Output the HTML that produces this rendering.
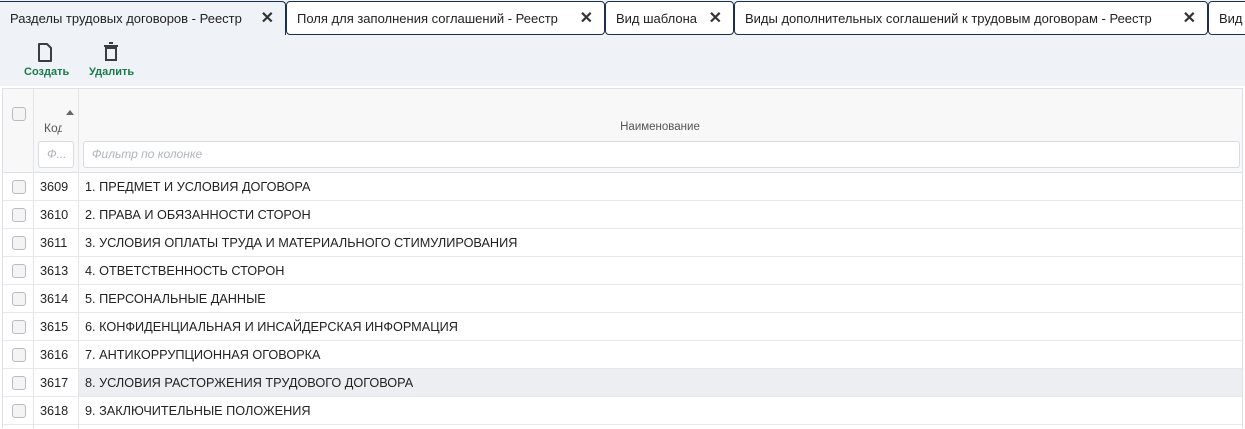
<!DOCTYPE html>
<html><head><meta charset="utf-8"><style>
*{box-sizing:border-box;margin:0;padding:0}
body{width:1245px;height:427px;overflow:hidden;background:#fff;font-family:"Liberation Sans",sans-serif;font-size:12.7px;color:#222;position:relative}
.top{position:absolute;left:0;top:0;width:1245px;height:86px;background:#eff2f7}
.tab{position:absolute;top:1px;height:34px;border:1.5px solid #1d2f4f;border-radius:4px;background:#fff;padding:0 0 0 10px;line-height:33px;font-size:13px;white-space:nowrap;overflow:hidden}
.tab .x{position:absolute;right:11px;top:0;font-size:16px;font-weight:bold;color:#333}
.tab.act{background:#eff2f7;border-bottom:none;border-left:none;border-radius:0 4px 0 0}
.btn{position:absolute;top:66px;font-size:11px;color:#1a7a4c;font-weight:bold}
.grid{position:absolute;left:2px;top:88px;width:1241px;height:340px;border:1px solid #dde0e5;border-bottom:none}
.hdr{position:absolute;left:0;top:0;width:1239px;height:84px;background:#f8f8f8;border-bottom:1px solid #dde0e5}
.vl{position:absolute;top:0;width:1px;height:340px;background:#e3e5e8}
.cb{position:absolute;width:14px;height:14px;border:1px solid #b8bcc2;border-radius:3px;background:#f4f4f4}
.row{position:absolute;left:0;width:1239px;height:28px;border-bottom:1px solid #e6e8eb}
.row .c{position:absolute;left:37px;top:7px}
.row .n{position:absolute;left:82px;top:7px}
.inp{position:absolute;height:27px;border:1px solid #d8dbe0;border-radius:3px;background:#fff;color:#b0b4ba;font-style:italic;font-size:12px;line-height:25px;padding-left:8px}
</style></head><body>
<div class="top"></div>
<div class="tab act" style="left:0;width:286px;border-left:none">Разделы трудовых договоров - Реестр<span class="x">✕</span></div>
<div class="tab" style="left:286px;width:319px">Поля для заполнения соглашений - Реестр<span class="x">✕</span></div>
<div class="tab" style="left:605px;width:129px">Вид шаблона<span class="x">✕</span></div>
<div class="tab" style="left:734px;width:474px">Виды дополнительных соглашений к трудовым договорам - Реестр<span class="x">✕</span></div>
<div class="tab" style="left:1208px;width:60px">Вид</div>
<svg style="position:absolute;left:38px;top:43px" width="14" height="19" viewBox="0 0 14 19"><path d="M1 1H9L13 5V18H1Z" fill="none" stroke="#3a3d44" stroke-width="2" stroke-linejoin="round"/></svg>
<svg style="position:absolute;left:104px;top:42px" width="14" height="20" viewBox="0 0 14 20"><path d="M0 4H14M5 1H9" stroke="#3a3d44" stroke-width="2"/><rect x="2" y="6" width="10" height="12" fill="none" stroke="#3a3d44" stroke-width="2"/></svg>
<div class="btn" style="left:24px">Создать</div>
<div class="btn" style="left:89px">Удалить</div>
<div class="grid">
<div class="hdr"></div>
<div class="vl" style="left:30px"></div><div class="vl" style="left:75px"></div>
<div class="cb" style="left:9px;top:18px"></div>
<div style="position:absolute;left:41px;top:32px;font-size:12px;color:#555;width:18px;overflow:hidden">Код</div>
<div style="position:absolute;left:63px;top:21px;width:0;height:0;border-left:4px solid transparent;border-right:4px solid transparent;border-bottom:5px solid #666"></div>
<div style="position:absolute;left:75px;width:1164px;top:32px;text-align:center;font-size:11.5px;color:#555">Наименование</div>
<div class="inp" style="left:35px;top:52px;width:36px">Ф...</div>
<div class="inp" style="left:80px;top:52px;width:1157px">Фильтр по колонке</div>
<div class="row" style="top:84px"><div class="cb" style="left:9px;top:7px"></div><span class="c">3609</span><span class="n">1. ПРЕДМЕТ И УСЛОВИЯ ДОГОВОРА</span></div>
<div class="row" style="top:112px"><div class="cb" style="left:9px;top:7px"></div><span class="c">3610</span><span class="n">2. ПРАВА И ОБЯЗАННОСТИ СТОРОН</span></div>
<div class="row" style="top:140px"><div class="cb" style="left:9px;top:7px"></div><span class="c">3611</span><span class="n">3. УСЛОВИЯ ОПЛАТЫ ТРУДА И МАТЕРИАЛЬНОГО СТИМУЛИРОВАНИЯ</span></div>
<div class="row" style="top:168px"><div class="cb" style="left:9px;top:7px"></div><span class="c">3613</span><span class="n">4. ОТВЕТСТВЕННОСТЬ СТОРОН</span></div>
<div class="row" style="top:196px"><div class="cb" style="left:9px;top:7px"></div><span class="c">3614</span><span class="n">5. ПЕРСОНАЛЬНЫЕ ДАННЫЕ</span></div>
<div class="row" style="top:224px"><div class="cb" style="left:9px;top:7px"></div><span class="c">3615</span><span class="n">6. КОНФИДЕНЦИАЛЬНАЯ И ИНСАЙДЕРСКАЯ ИНФОРМАЦИЯ</span></div>
<div class="row" style="top:252px"><div class="cb" style="left:9px;top:7px"></div><span class="c">3616</span><span class="n">7. АНТИКОРРУПЦИОННАЯ ОГОВОРКА</span></div>
<div class="row" style="top:280px"><div style="position:absolute;left:76px;top:0;width:1163px;height:27px;background:#eceef1"></div><div class="cb" style="left:9px;top:7px"></div><span class="c">3617</span><span class="n" style="position:absolute">8. УСЛОВИЯ РАСТОРЖЕНИЯ ТРУДОВОГО ДОГОВОРА</span></div>
<div class="row" style="top:308px"><div class="cb" style="left:9px;top:7px"></div><span class="c">3618</span><span class="n">9. ЗАКЛЮЧИТЕЛЬНЫЕ ПОЛОЖЕНИЯ</span></div>
</div>
</body></html>
